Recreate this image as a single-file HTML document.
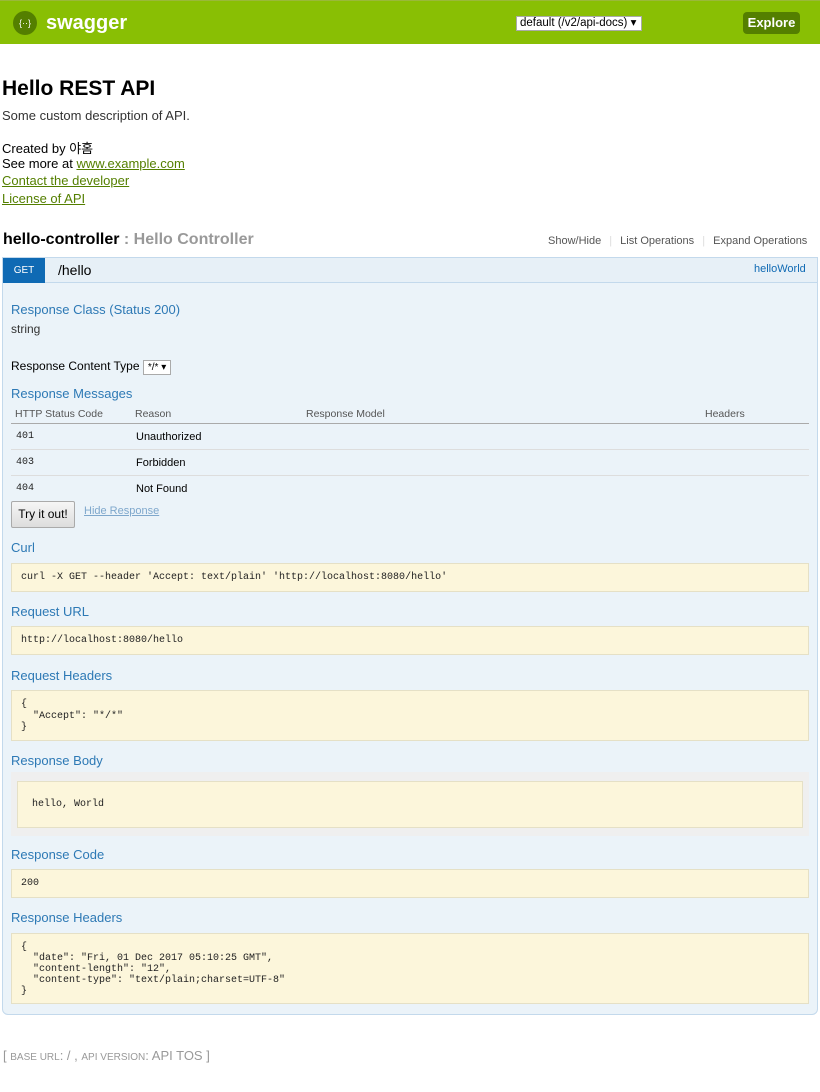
<!DOCTYPE html>
<html><head><meta charset="utf-8"><style>
*{margin:0;padding:0;box-sizing:border-box}
body{width:820px;height:1092px;position:relative;background:#fff;font-family:"Liberation Sans","Noto Sans CJK KR",sans-serif;color:#000;overflow:hidden}
.a{position:absolute;white-space:nowrap;line-height:1.15}
.hdr{left:0;top:0;width:820px;height:44px;background:#89bf04;border-top:1px solid #9ab83a}
.t{color:#2d79b5;font-size:13px}
.m{font-family:"Liberation Mono","DejaVu Sans Mono",monospace;font-size:10px;color:#222}
.box{position:absolute;left:11px;width:798px;background:#fcf6db;border:1px solid #e5e0c6}
a,.lk{color:#547f00;text-decoration:underline}
.s{font-size:12px}
.row{position:absolute;left:11px;width:798px;border-top:1px solid #ddd}
</style></head><body>
<div class="a hdr"></div>
<div class="a" style="left:13px;top:11px;width:24px;height:24px;border-radius:12px;background:#547f00;color:#fff;font-size:9px;text-align:center;line-height:24px">{&middot;&middot;}</div>
<div class="a" style="left:46px;top:12px;color:#fff;font-weight:bold;font-size:20px">swagger</div>
<div class="a" style="left:516px;top:16px;width:126px;height:15px;background:#fff;border:1px solid #aaa;font-size:11.5px;line-height:13px;padding-left:3px">default (/v2/api-docs) ▾</div>
<div class="a" style="left:743px;top:12px;width:57px;height:22px;background:#547f00;border-radius:4px;color:#fff;font-weight:bold;font-size:13px;text-align:center;line-height:22px">Explore</div>

<div class="a" style="left:2px;top:77px;font-size:21px;font-weight:bold">Hello REST API</div>
<div class="a" style="left:2px;top:109px;font-size:13px;color:#333">Some custom description of API.</div>
<div class="a" style="left:2px;top:141px;font-size:13px;line-height:16px">Created by 야홈</div>
<div class="a" style="left:2px;top:156px;font-size:13px;line-height:16px">See more at <span class="lk">www.example.com</span></div>
<div class="a lk" style="left:2px;top:174px;font-size:13px">Contact the developer</div>
<div class="a lk" style="left:2px;top:192px;font-size:13px">License of API</div>

<div class="a" style="left:3px;top:231px;font-size:16px;font-weight:bold">hello-controller <span style="color:#999">: Hello Controller</span></div>
<div class="a" style="left:548px;top:235px;font-size:11px;color:#555">Show/Hide <span style="color:#ddd;margin:0 5px">|</span> List Operations <span style="color:#ddd;margin:0 5px">|</span> Expand Operations</div>

<div class="a" style="left:2px;top:257px;width:816px;height:758px;background:#ebf3f9;border:1px solid #c3d9ec;border-radius:0 0 6px 6px"></div>
<div class="a" style="left:2px;top:257px;width:816px;height:26px;background:#e7f0f7;border:1px solid #c3d9ec"></div>
<div class="a" style="left:3px;top:258px;width:42px;height:25px;background:#0f6ab4;color:#fff;font-size:10px;text-align:center;line-height:25px">GET</div>
<div class="a" style="left:58px;top:262px;font-size:14px">/hello</div>
<div class="a" style="left:754px;top:263px;font-size:11px;color:#0f6ab4">helloWorld</div>

<div class="a t" style="left:11px;top:303px">Response Class (Status 200)</div>
<div class="a s" style="left:11px;top:323px;color:#333">string</div>
<div class="a s" style="left:11px;top:360px">Response Content Type <span style="display:inline-block;border:1px solid #aaa;background:#fff;font-size:10px;padding:0 4px;line-height:13px">*/* ▾</span></div>
<div class="a t" style="left:11px;top:387px">Response Messages</div>
<div class="a" style="left:15px;top:408px;font-size:10.5px;color:#555">HTTP Status Code</div>
<div class="a" style="left:135px;top:408px;font-size:10.5px;color:#555">Reason</div>
<div class="a" style="left:306px;top:408px;font-size:10.5px;color:#555">Response Model</div>
<div class="a" style="left:705px;top:408px;font-size:10.5px;color:#555">Headers</div>
<div class="row" style="top:423px;border-top:1px solid #aaa"></div>
<div class="a m" style="left:16px;top:431px">401</div><div class="a" style="left:136px;top:431px;font-size:11px">Unauthorized</div>
<div class="row" style="top:449px"></div>
<div class="a m" style="left:16px;top:457px">403</div><div class="a" style="left:136px;top:457px;font-size:11px">Forbidden</div>
<div class="row" style="top:475px"></div>
<div class="a m" style="left:16px;top:483px">404</div><div class="a" style="left:136px;top:483px;font-size:11px">Not Found</div>
<div class="a" style="left:11px;top:501px;width:64px;height:27px;border:1px solid #aaa;border-radius:2px;background:linear-gradient(#f6f6f6,#ddd);font-size:12px;text-align:center;line-height:25px">Try it out!</div>
<div class="a" style="left:84px;top:505px;font-size:11px;color:#7ea7cc;text-decoration:underline">Hide Response</div>

<div class="a t" style="left:11px;top:541px">Curl</div>
<div class="box m" style="top:563px;height:29px;padding:8px 9px">curl -X GET --header 'Accept: text/plain' 'http://localhost:8080/hello'</div>
<div class="a t" style="left:11px;top:605px">Request URL</div>
<div class="box m" style="top:626px;height:29px;padding:8px 9px">http://localhost:8080/hello</div>
<div class="a t" style="left:11px;top:669px">Request Headers</div>
<div class="box m" style="top:690px;height:51px;padding:8px 9px;line-height:11.5px;white-space:pre">{
  "Accept": "*/*"
}</div>
<div class="a t" style="left:11px;top:754px">Response Body</div>
<div class="a" style="left:11px;top:772px;width:798px;height:64px;background:#efefef"></div>
<div class="box m" style="left:17px;width:786px;top:781px;height:47px;padding:17px 14px">hello, World</div>
<div class="a t" style="left:11px;top:848px">Response Code</div>
<div class="box m" style="top:869px;height:29px;padding:8px 9px">200</div>
<div class="a t" style="left:11px;top:911px">Response Headers</div>
<div class="box m" style="top:933px;height:71px;padding:8px 9px;line-height:11px;white-space:pre">{
  "date": "Fri, 01 Dec 2017 05:10:25 GMT",
  "content-length": "12",
  "content-type": "text/plain;charset=UTF-8"
}</div>

<div class="a" style="left:3px;top:1049px;font-size:13px;color:#999">[ <span style="font-size:10px">BASE URL</span>: / , <span style="font-size:10px">API VERSION</span>: API TOS ]</div>
</body></html>
